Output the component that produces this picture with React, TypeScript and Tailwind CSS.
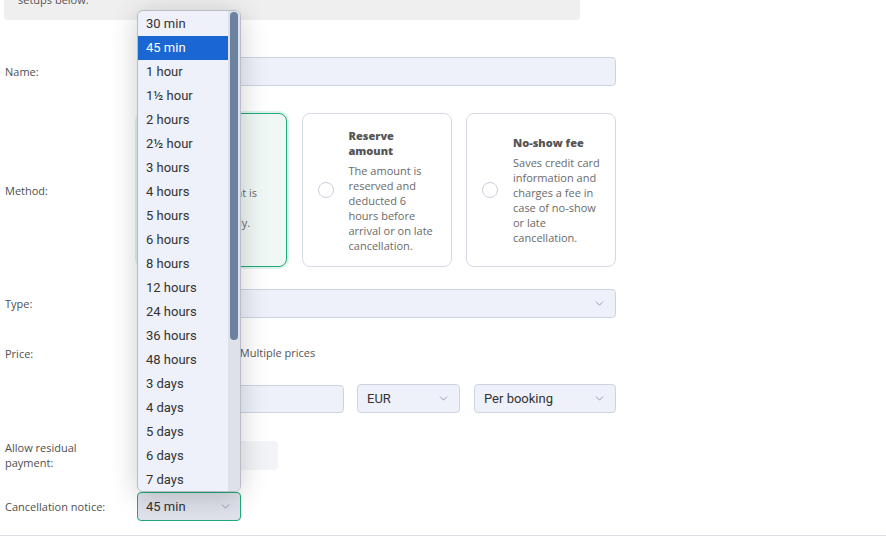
import React from 'react';
import { ChevronDown } from 'lucide-react';

const options = [
  '30 min', '45 min', '1 hour', '1½ hour', '2 hours', '2½ hour', '3 hours', '4 hours', '5 hours', '6 hours',
  '8 hours', '12 hours', '24 hours', '36 hours', '48 hours', '3 days', '4 days', '5 days', '6 days', '7 days',
];

const Row: React.FC<{ label: React.ReactNode; className?: string; children: React.ReactNode }> = ({ label, className = '', children }) => (
  <div className={`flex w-[611px] items-center ${className}`}>
    <div className="w-[132px] shrink-0">
      <div className="max-w-[110px] text-[11px] leading-[15px] text-[#4f4f4f]">{label}</div>
    </div>
    <div className="min-w-0 flex-1">{children}</div>
  </div>
);

const Select: React.FC<{ value?: string; className?: string }> = ({ value, className = '' }) => (
  <div className={`flex h-[29px] items-center justify-between rounded border border-[#cdd3e0] bg-[#eef1fa] pl-[9px] pr-[9px] font-['Roboto',sans-serif] text-[13px] text-[#333] ${className}`}>
    <span>{value}</span>
    <ChevronDown className="h-[13px] w-[13px] text-[#7b8ba6]" strokeWidth={1.5} />
  </div>
);

const MethodCard: React.FC<{ selected?: boolean; title: React.ReactNode; body: string }> = ({ selected, title, body }) => (
  <div
    className={`flex h-[154px] w-[150px] items-center gap-[15px] rounded-lg border pl-[15px] ${
      selected
        ? 'border-[#1faa7a] bg-[#eff8f5] shadow-[0_0_0_2px_rgba(31,170,122,0.15)]'
        : 'border-[#d6dae4] bg-white'
    }`}
  >
    <span className="h-4 w-4 shrink-0 rounded-full border border-[#c8cedb] bg-white" />
    <div className="w-[89px] text-[11px] leading-[15px] text-[#6a6a6a]">
      <div className="mb-[5px] font-extrabold text-[#555]">{title}</div>
      <div>{body}</div>
    </div>
  </div>
);

export default function App() {
  return (
    <div className="relative h-[540px] w-full overflow-hidden bg-white font-['Open_Sans',sans-serif]">
      {/* info banner, scrolled partly out of view */}
      <div className="ml-1 mt-[-35px] w-[576px] rounded bg-[#efefef] px-[14px] pb-[13px] pt-3 text-[11px] leading-[15px] text-[#555]">
        <p>Choose how guests pay when they book. You can add one or more payment</p>
        <p>setups below.</p>
      </div>

      <div className="px-[5px]">
        <Row label="Name:" className="mt-[37px]">
          <div className="h-[29px] rounded border border-[#cdd3e0] bg-[#eef1fa]" />
        </Row>

        <Row label="Method:" className="mt-[27px]">
          <div className="flex justify-between">
            <MethodCard
              selected
              title={
                <>
                  Pay in
                  <br />
                  advance
                </>
              }
              body="The amount is charged immediately."
            />
            <MethodCard title="Reserve amount" body="The amount is reserved and deducted 6 hours before arrival or on late cancellation." />
            <MethodCard title="No-show fee" body="Saves credit card information and charges a fee in case of no-show or late cancellation." />
          </div>
        </Row>

        <Row label="Type:" className="mt-[22px]">
          <Select value="Fixed amount" />
        </Row>

        <Row label="Price:" className="mt-[25px]">
          <div className="flex h-5 items-center text-[11px] text-[#555]">
            <span className="h-[14px] w-[14px] rounded-full border-4 border-[#1faa7a] bg-white" />
            <span className="ml-[5px]">Single price</span>
            <span className="ml-[6px] h-[14px] w-[14px] rounded-full border border-[#c8cedb] bg-white" />
            <span className="ml-[5px]">Multiple prices</span>
          </div>
        </Row>

        <Row label="" className="mt-[21px]">
          <div className="flex items-center">
            <div className="h-[28px] w-[207px] rounded border border-[#cdd3e0] bg-[#eef1fa]" />
            <Select value="EUR" className="ml-[13px] h-[28px] w-[103px]" />
            <Select value="Per booking" className="ml-[14px] h-[28px] w-[142px]" />
          </div>
        </Row>

        <Row label="Allow residual payment:" className="mt-[27px]">
          <div className="h-[29px] w-[141px] rounded bg-[#f3f4f8]" />
        </Row>

        <Row label="Cancellation notice:" className="mt-[22px]">
          <div className="flex h-[29px] w-[104px] items-center justify-between rounded border-[1.5px] border-[#1faa7a] bg-[#dfe2ea] pl-2 pr-[8px] font-['Roboto',sans-serif] text-[13px] text-[#333]">
            <span>45 min</span>
            <ChevronDown className="h-[13px] w-[13px] text-[#7b8ba6]" strokeWidth={1.5} />
          </div>
        </Row>
      </div>

      <div className="mt-[14px] border-t border-[#dcdde4]" />

      {/* open select list */}
      <div className="absolute left-[137px] top-[10px] flex h-[482px] w-[104px] overflow-hidden rounded-md border border-[#b8bcc5] bg-[#eef1fa] shadow-[0_4px_28px_rgba(0,0,0,0.2)]">
        <ul className="flex-1 pt-px font-['Roboto',sans-serif] text-[13px] text-[#333]">
          {options.map((o) => (
            <li
              key={o}
              className={`flex h-6 items-center pl-2 ${o === '45 min' ? 'bg-[#1a66d2] text-white' : ''}`}
            >
              {o}
            </li>
          ))}
        </ul>
        <div className="w-3 shrink-0 bg-[#dde1ea] pt-[1px]">
          <div className="mx-auto h-[328px] w-2 rounded-full bg-[#6b819f]" />
        </div>
      </div>
    </div>
  );
}
